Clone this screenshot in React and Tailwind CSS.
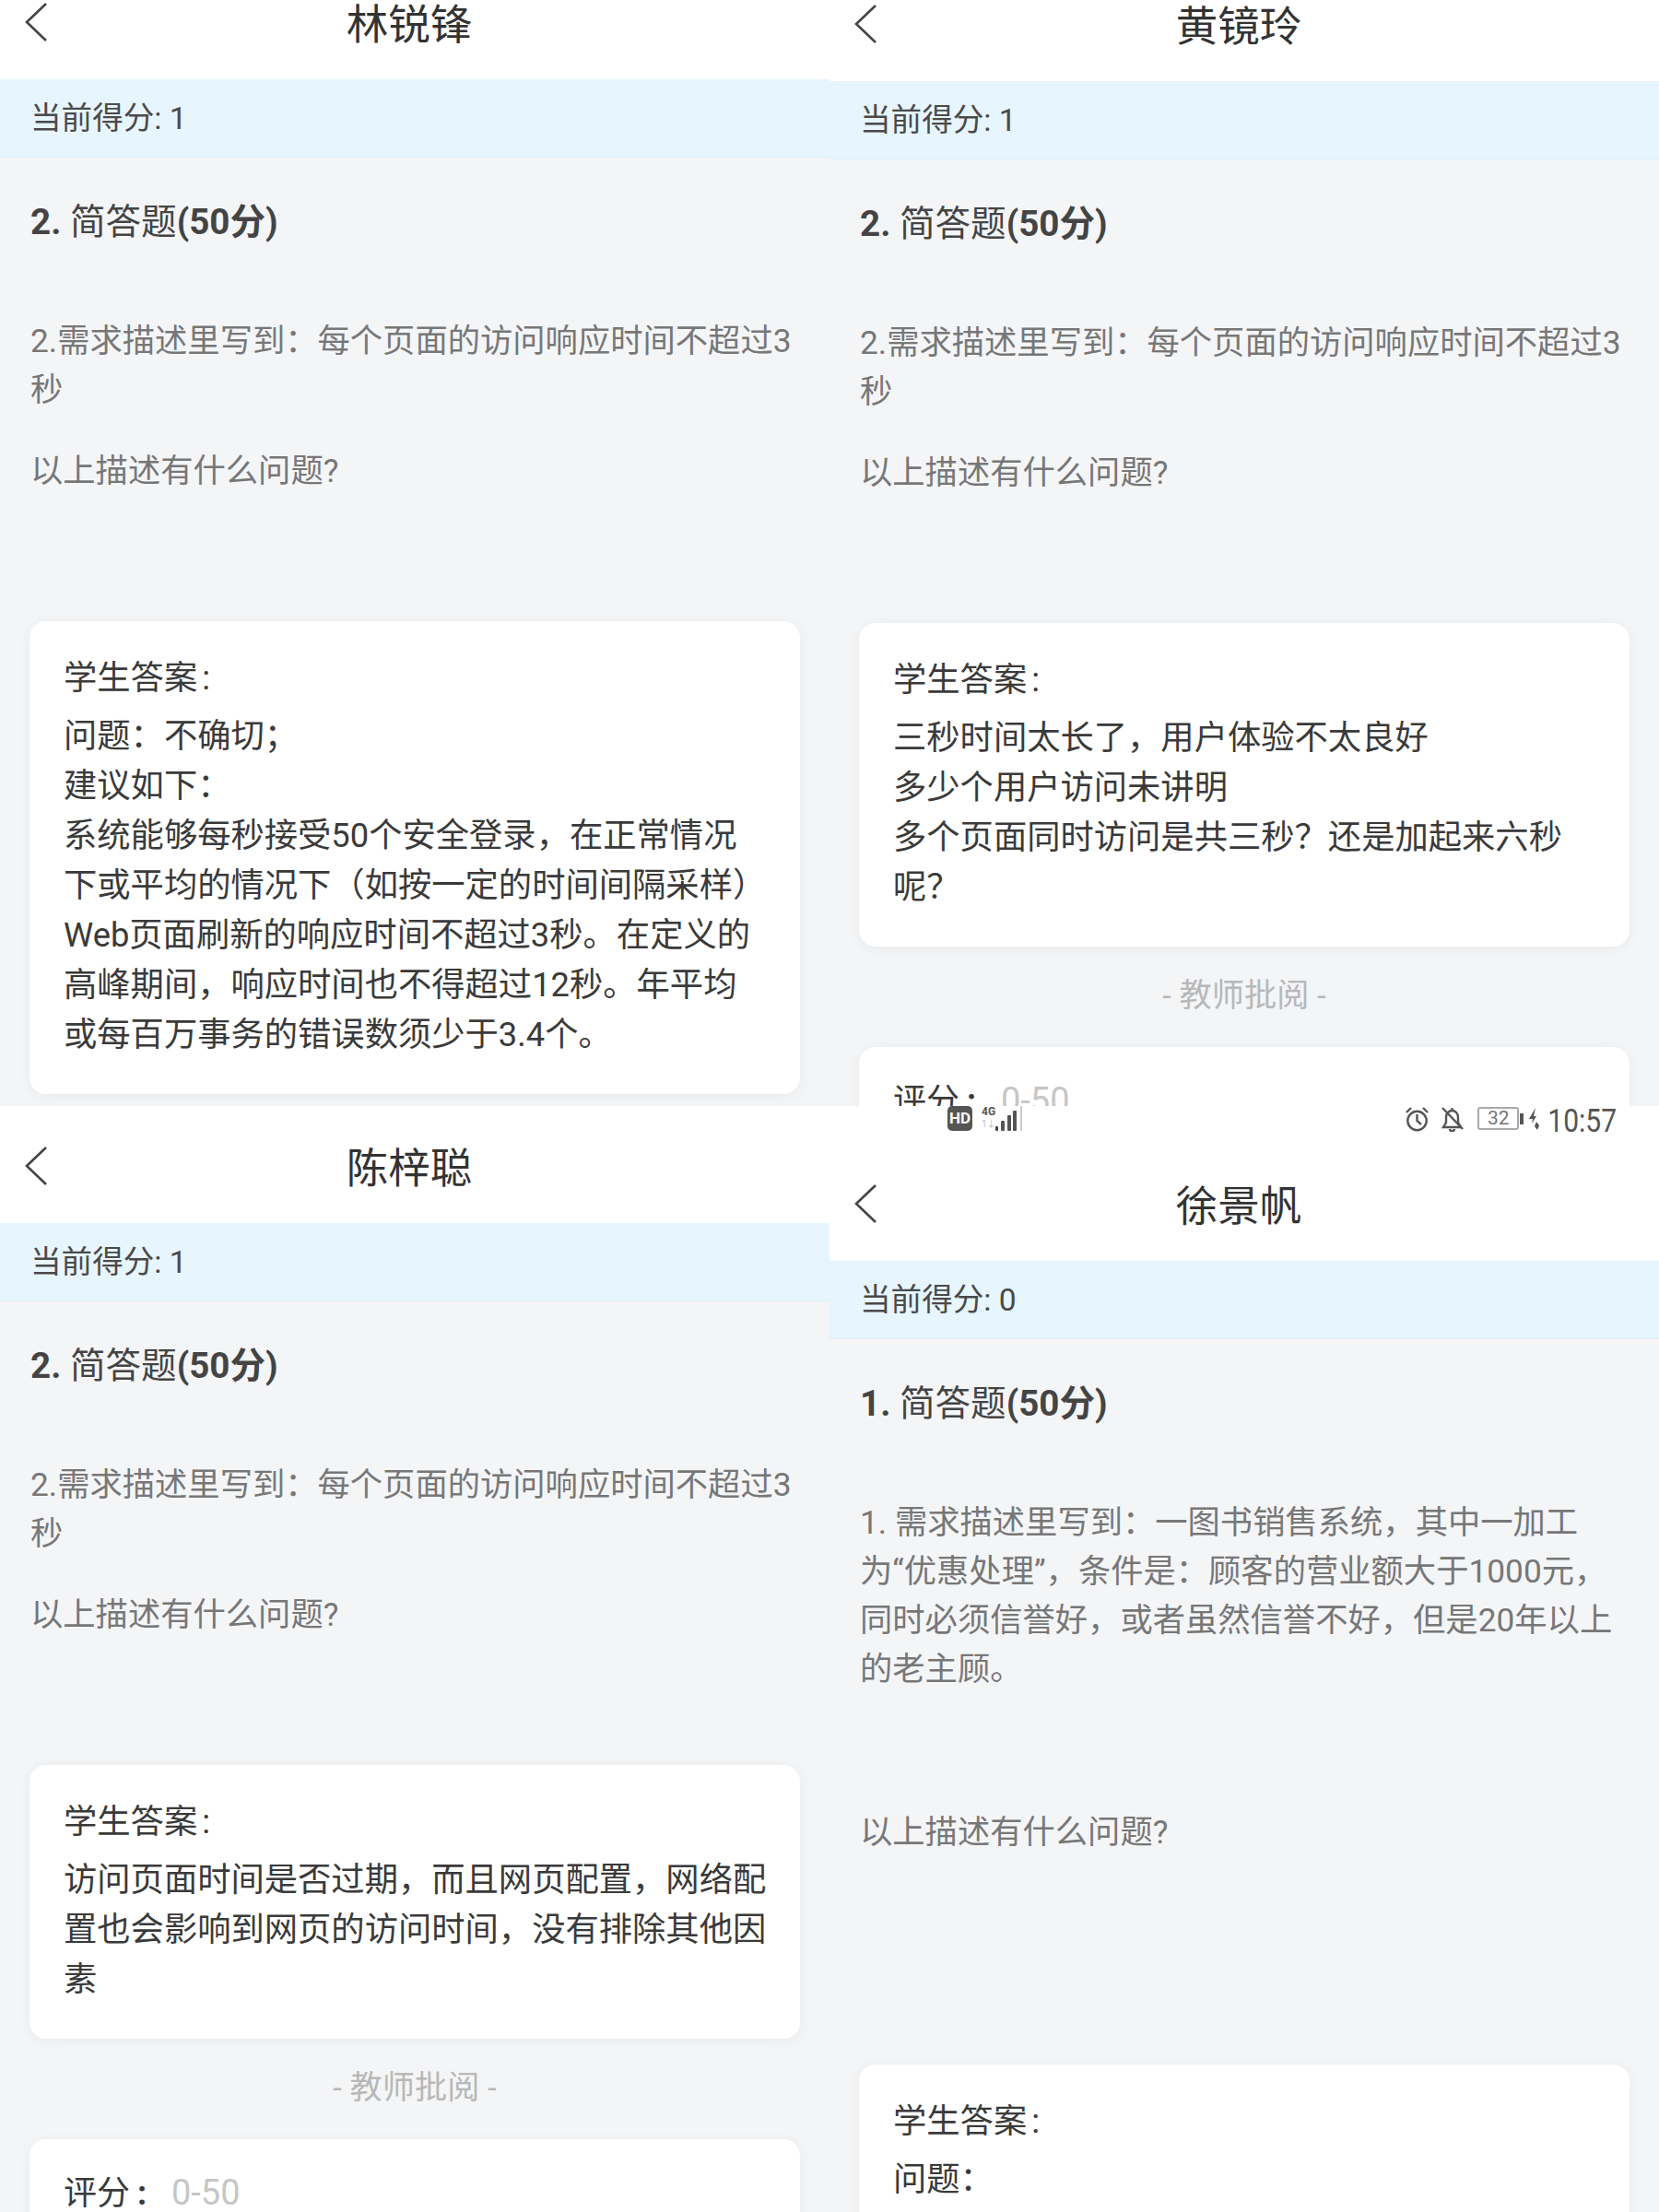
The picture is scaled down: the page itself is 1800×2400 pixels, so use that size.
const FONT = 'font-[Roboto,"Noto_Sans_CJK_SC",sans-serif]';

const Chevron = () => (
  <svg viewBox="0 0 26 44" fill="none" className="mb-[7px] ml-[26px] h-[44px] w-[26px] shrink-0 stroke-[#444]" strokeWidth="2.6">
    <path d="M24 2 L3 22 L24 42" />
  </svg>
);

const Header = ({ name, className }) => (
  <div className={`flex items-end bg-white pb-[33px] pr-[64px] ${className}`}>
    <div className="flex w-full items-center">
      <Chevron />
      <div className="flex-1 text-center text-[45.5px] leading-[44px] text-[#333]">{name}</div>
    </div>
  </div>
);

const ScoreBar = ({ score }) => (
  <div className="flex h-[85px] items-center border-b border-[#e1eff7] bg-[#e6f5fe] pl-[33px] pt-[2px] text-[33.6px] text-[#4a4a4a]">
    当前得分: {score}
  </div>
);

const Question = ({ number }) => (
  <div className="mt-[43px] pl-[33px] text-[38.6px] leading-[54px] text-[#444]">
    <span className="font-bold">{number}.</span> 简答题<span className="font-bold">(50分)</span>
  </div>
);

const Description = ({ lines, ask, askClassName }) => (
  <div className="mt-[76px] pl-[33px] text-[35.3px] leading-[53px] text-[#777]">
    {lines.map((line) => (
      <div key={line} className="whitespace-nowrap">{line}</div>
    ))}
    <div className={askClassName}>{ask}</div>
  </div>
);

const AnswerCard = ({ lines, className }) => (
  <div className={`mx-[32px] rounded-[18px] bg-white pb-[37px] pl-[37px] pt-[35px] text-[36.3px] leading-[54px] text-[#3a3a3a] shadow-[0_2px_14px_rgba(0,0,0,0.05)] ${className}`}>
    <div className="mb-[9px]">学生答案<span className="ml-[5px]">:</span></div>
    {lines.map((line) => (
      <div key={line} className="whitespace-nowrap">{line}</div>
    ))}
  </div>
);

const Review = () => (
  <>
    <div className="mt-[26px] text-center text-[35.2px] leading-[54px] text-[#b8b8b8]">- 教师批阅 -</div>
    <div className="mx-[32px] mt-[29px] h-[200px] rounded-[18px] bg-white pl-[37px] pt-[31px] text-[36px] leading-[54px] text-[#3a3a3a] shadow-[0_2px_14px_rgba(0,0,0,0.05)]">
      评分
      <span className="inline-block w-[45px] pl-[8px] font-bold">:</span>
      <span className="text-[38px] text-[#c6c6c6]">0-50</span>
    </div>
  </>
);

const SignalBars = () => (
  <svg viewBox="0 0 45 27" className="h-[27px] w-[45px]">
    <rect x="15" y="22" width="3" height="5" rx="1" fill="#444" />
    <rect x="21" y="16" width="4" height="11" rx="1" fill="#555" />
    <rect x="28" y="10" width="4" height="17" rx="1" fill="#555" />
    <rect x="34" y="5" width="4" height="22" rx="1" fill="#555" />
    <rect x="42" y="0" width="2" height="27" fill="#ccc" />
  </svg>
);

const AlarmIcon = () => (
  <svg viewBox="0 0 27 28" fill="none" stroke="#555" strokeWidth="2.4" className="h-[28px] w-[27px]">
    <circle cx="13.5" cy="16" r="10.2" />
    <path d="M13.5 9 V16 L18 20" />
    <path d="M2 7 L7 2 M25 7 L20 2" />
  </svg>
);

const BellOffIcon = () => (
  <svg viewBox="0 0 26 28" fill="none" stroke="#555" strokeWidth="2.4" className="h-[28px] w-[26px]">
    <path d="M3 23 H22 L19 18 V12 C19 8 16 5 12.5 5 C9 5 6 8 6 12 V18 Z" />
    <path d="M12.5 2 V5 M10 25 C10 28 15 28 15 25" />
    <path d="M2 2 L24 25" />
  </svg>
);

const ChargeIcon = () => (
  <svg viewBox="0 0 24 26" className="h-[26px] w-[24px] fill-[#555]">
    <rect x="1" y="7" width="4" height="12" />
    <path d="M18 1 L11 13 L15 13 L14 18 L19 10 L16 10 Z" />
    <path d="M19 16 L17 21 L20 25 L22 20 Z" />
  </svg>
);

const StatusBar = () => (
  <div className="flex h-[36px] items-start justify-between bg-white pl-[128px] pr-[46px] text-[#555]">
    <div className="flex items-start gap-[10px]">
      <div className="flex h-[27px] w-[27px] items-center justify-center rounded-[5px] bg-[#555] text-[17px] font-bold leading-none text-white">HD</div>
      <div className="relative h-[27px] w-[45px]">
        <span className="absolute left-0 top-0 text-[12px] font-bold leading-[12px]">4G</span>
        <span className="absolute left-0 top-[15px] text-[10px] leading-[10px] text-[#bbb]">1↓</span>
        <SignalBars />
      </div>
    </div>
    <div className="flex items-start">
      <div className="mr-[12px]"><AlarmIcon /></div>
      <div className="mr-[14px]"><BellOffIcon /></div>
      <div className="mt-[1px] flex h-[25px] w-[45px] items-center justify-center rounded-[3px] border-2 border-[#aaa] text-[21px] leading-none text-[#777]">32</div>
      <div className="mt-[1px]"><ChargeIcon /></div>
      <div className="ml-[7px] origin-top scale-y-[1.15] text-[30px] leading-[28px] text-[#555]">10:57</div>
    </div>
  </div>
);

const Panel = ({ children }) => (
  <div className="h-[1200px] overflow-hidden bg-[#f4f5f7]">{children}</div>
);

const descLines = ['2.需求描述里写到：每个页面的访问响应时间不超过3', '秒'];

export default function App() {
  return (
    <div className={`grid w-[1800px] grid-cols-2 ${FONT}`}>
      <Panel>
        <Header name="林锐锋" className="h-[86px]" />
        <ScoreBar score="1" />
        <Question number="2" />
        <Description lines={descLines} ask="以上描述有什么问题?" askClassName="mt-[35px]" />
        <AnswerCard
          className="mt-[136px]"
          lines={[
            '问题：不确切；',
            '建议如下：',
            '系统能够每秒接受50个安全登录，在正常情况',
            '下或平均的情况下（如按一定的时间间隔采样）',
            'Web页面刷新的响应时间不超过3秒。在定义的',
            '高峰期间，响应时间也不得超过12秒。年平均',
            '或每百万事务的错误数须少于3.4个。',
          ]}
        />
      </Panel>

      <Panel>
        <Header name="黄镜玲" className="h-[88px]" />
        <ScoreBar score="1" />
        <Question number="2" />
        <Description lines={descLines} ask="以上描述有什么问题?" askClassName="mt-[35px]" />
        <AnswerCard
          className="mt-[136px]"
          lines={[
            '三秒时间太长了，用户体验不太良好',
            '多少个用户访问未讲明',
            '多个页面同时访问是共三秒？还是加起来六秒',
            '呢？',
          ]}
        />
        <Review />
      </Panel>

      <Panel>
        <Header name="陈梓聪" className="h-[127px]" />
        <ScoreBar score="1" />
        <Question number="2" />
        <Description lines={descLines} ask="以上描述有什么问题?" askClassName="mt-[35px]" />
        <AnswerCard
          className="mt-[136px]"
          lines={[
            '访问页面时间是否过期，而且网页配置，网络配',
            '置也会影响到网页的访问时间，没有排除其他因',
            '素',
          ]}
        />
        <Review />
      </Panel>

      <Panel>
        <StatusBar />
        <Header name="徐景帆" className="h-[132px]" />
        <ScoreBar score="0" />
        <Question number="1" />
        <Description
          lines={[
            '1. 需求描述里写到：一图书销售系统，其中一加工',
            '为“优惠处理”，条件是：顾客的营业额大于1000元，',
            '同时必须信誉好，或者虽然信誉不好，但是20年以上',
            '的老主顾。',
          ]}
          ask="以上描述有什么问题?"
          askClassName="mt-[124px]"
        />
        <AnswerCard className="mt-[225px]" lines={['问题：']} />
      </Panel>
    </div>
  );
}
